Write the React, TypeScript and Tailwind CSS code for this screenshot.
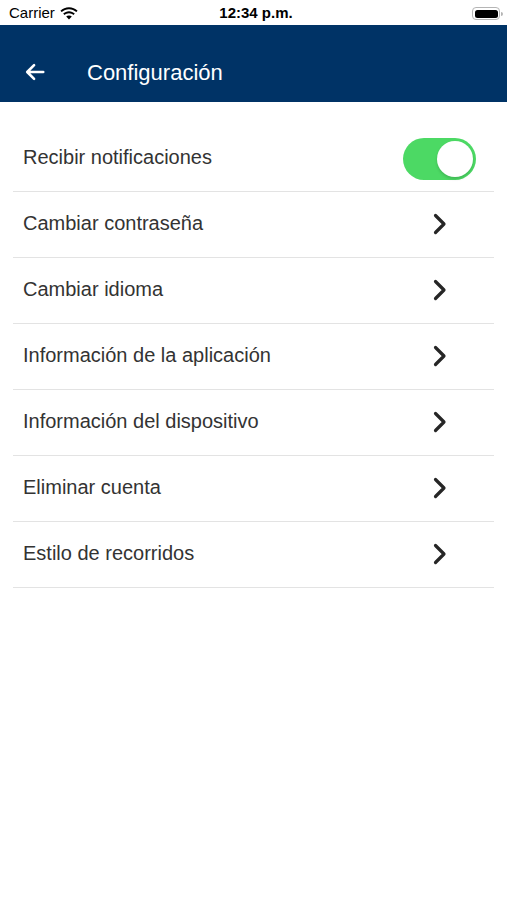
import { useState } from 'react'

const items = [
  'Cambiar contraseña',
  'Cambiar idioma',
  'Información de la aplicación',
  'Información del dispositivo',
  'Eliminar cuenta',
  'Estilo de recorridos',
]

function Chevron() {
  return (
    <svg className="w-[16px] h-[24px]" viewBox="0 0 16 24" fill="none">
      <path d="M3.5 3.5 L12 12 L3.5 20.5" stroke="#262626" strokeWidth="3.2" strokeLinecap="round" strokeLinejoin="round" />
    </svg>
  )
}

export default function App() {
  const [notify, setNotify] = useState(true)

  return (
    <div className="w-[507px] h-[900px] bg-white flex flex-col font-['Liberation_Sans',Arial,sans-serif]">
      {/* Status bar */}
      <div className="h-[25px] flex items-center justify-between pl-[9px] pr-[4px] pt-[2px] text-[15px] text-black">
        <div className="flex items-center gap-[5px] w-[120px]">
          <span>Carrier</span>
          <svg className="w-[18px] h-[14px]" viewBox="0 0 18 14" fill="black">
            <path d="M9 2.2c2.8 0 5.4 1.1 7.3 2.9l1.3-1.4C15.3 1.4 12.3.2 9 .2S2.7 1.4.4 3.7l1.3 1.4C3.6 3.3 6.2 2.2 9 2.2z" />
            <path d="M9 6.2c1.7 0 3.3.7 4.5 1.8l1.3-1.4C13.3 5.1 11.2 4.2 9 4.2S4.7 5.1 3.2 6.6L4.5 8c1.2-1.1 2.8-1.8 4.5-1.8z" />
            <path d="M9 8.4c-1.1 0-2.1.4-2.8 1.1L9 12.6l2.8-3.1C11.1 8.8 10.1 8.4 9 8.4z" />
          </svg>
        </div>
        <span className="font-semibold">12:34 p.m.</span>
        <div className="w-[120px] flex justify-end">
          <div className="flex items-center gap-[1px]">
            <div className="w-[28px] h-[13px] rounded-[4px] border border-[#b5b5b5] p-[1.5px]">
              <div className="w-full h-full bg-black rounded-[2.5px]" />
            </div>
            <div className="w-[2px] h-[4px] bg-[#b5b5b5] rounded-r-sm" />
          </div>
        </div>
      </div>

      {/* Header */}
      <div className="h-[77px] bg-[#003366] flex items-center pt-[17px]">
        <svg className="ml-[24px] w-[22px] h-[22px]" viewBox="0 0 24 24" fill="none">
          <path d="M21 12H4M11 4.5 3.5 12l7.5 7.5" stroke="white" strokeWidth="2.8" strokeLinecap="round" strokeLinejoin="round" />
        </svg>
        <span className="ml-[41px] text-white text-[22px]">Configuración</span>
      </div>

      {/* List */}
      <div className="px-[13px] pt-[24px]">
        <div className="h-[66px] border-b border-[#e3e3e3] flex items-center justify-between pl-[10px] pr-[18px]">
          <span className="text-[20px] text-[#333] pb-[3px]">Recibir notificaciones</span>
          <button
            onClick={() => setNotify(!notify)}
            className={`w-[73px] h-[42px] rounded-full p-[3px] flex ${notify ? 'bg-[#4cd964] justify-end' : 'bg-[#e5e5e5] justify-start'}`}
          >
            <div className="w-[36px] h-[36px] rounded-full bg-white shadow-[0_2px_3px_rgba(0,0,0,0.15)]" />
          </button>
        </div>
        {items.map((label) => (
          <div key={label} className="h-[66px] border-b border-[#e3e3e3] flex items-center justify-between pl-[10px] pr-[46px]">
            <span className="text-[20px] text-[#333] pb-[3px]">{label}</span>
            <div className="pb-[1px]">
              <Chevron />
            </div>
          </div>
        ))}
      </div>
    </div>
  )
}
